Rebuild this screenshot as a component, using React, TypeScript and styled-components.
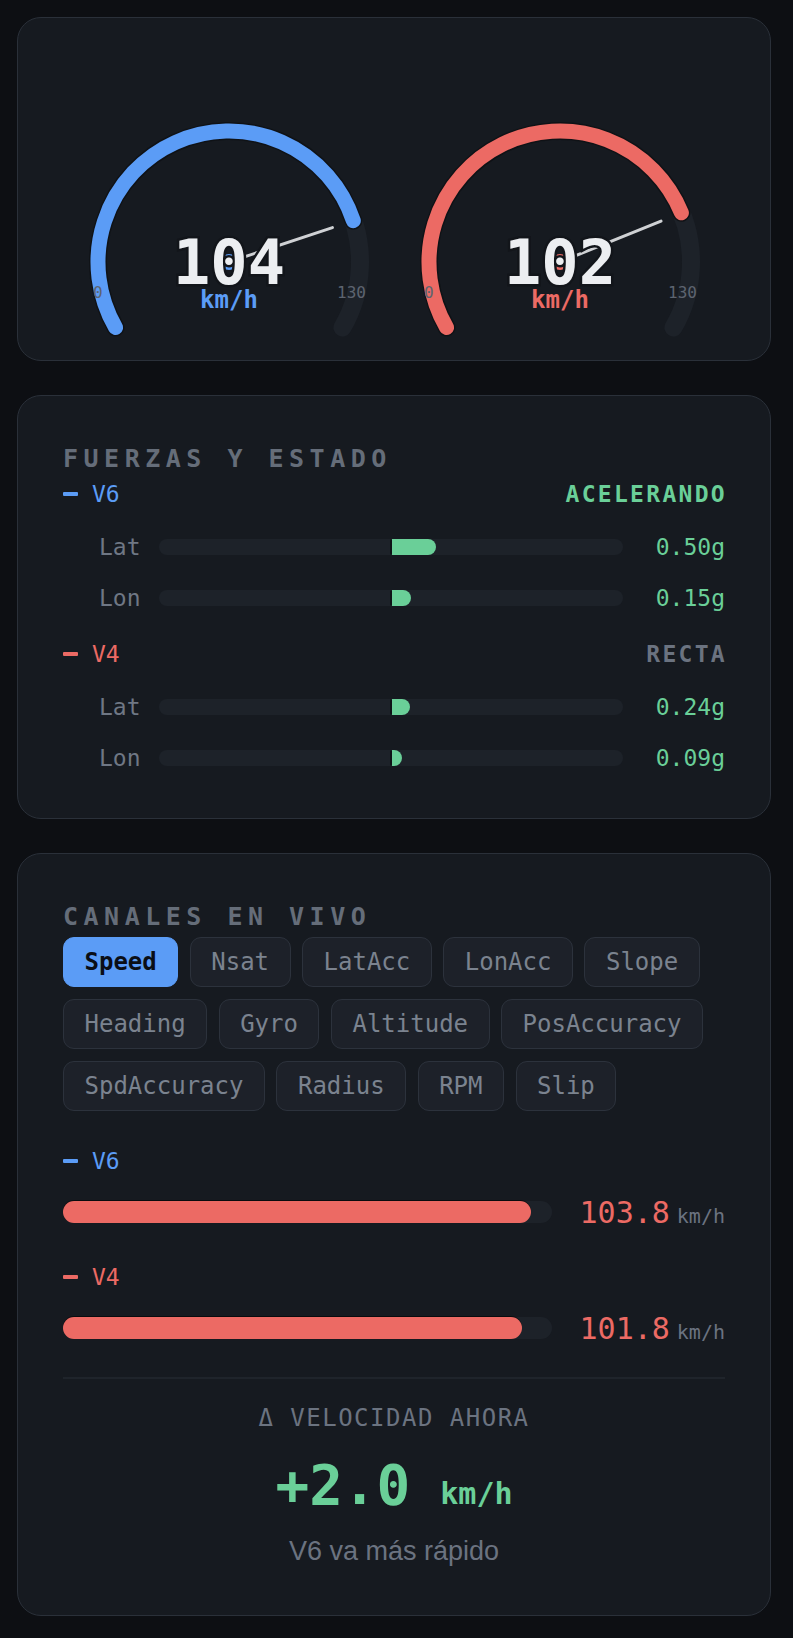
import React from 'react';
import styled, { createGlobalStyle } from 'styled-components';

const MONO = '"DejaVu Sans Mono", "Liberation Mono", monospace';
const SANS = '"Liberation Sans", Arial, sans-serif';

const BLUE = '#5b9cf6';
const RED = '#ec6a64';
const GREEN = '#6acf98';
const MUTED = '#6b7380';

const GlobalStyle = createGlobalStyle`
  html, body {
    margin: 0;
    padding: 0;
    background: #0d0f13;
  }
  body {
    font-family: ${MONO};
  }
`;

const Page = styled.main`
  display: flex;
  flex-direction: column;
  gap: 34px;
  padding: 17px 22px 23px 17px;
`;

const Card = styled.section`
  background: #161a20;
  border: 1px solid #2a3039;
  border-radius: 24px;
  padding: 48px 45px 34px;
`;

const GaugeCard = styled(Card)`
  display: grid;
  grid-template-columns: 1fr 1fr;
  padding: 94px 45px 18px;
`;

const LiveCard = styled(Card)`
  padding-bottom: 48px;
`;

const GaugeSvg = styled.svg`
  display: block;
  margin: 0 auto;
  overflow: visible;
`;

const Title = styled.h2<{ $mb: number }>`
  margin: 0 0 ${(p) => p.$mb}px;
  font: 700 25px/30px ${MONO};
  letter-spacing: 5.5px;
  color: #656d79;
`;

const Head = styled.div<{ $mb: number }>`
  display: flex;
  align-items: center;
  justify-content: space-between;
  height: 28px;
  margin-bottom: ${(p) => p.$mb}px;
`;

const Tag = styled.span<{ $color: string }>`
  display: flex;
  align-items: center;
  gap: 14px;
  font-size: 23px;
  line-height: 28px;
  color: ${(p) => p.$color};
`;

const Dash = styled.span<{ $color: string }>`
  width: 15px;
  height: 4px;
  border-radius: 1px;
  background: ${(p) => p.$color};
`;

const Status = styled.span<{ $color: string }>`
  margin-right: -2px;
  font-size: 23px;
  font-weight: 700;
  letter-spacing: 2.3px;
  color: ${(p) => p.$color};
`;

const Group = styled.div`
  & + & {
    margin-top: 16px;
  }
`;

const ForceRow = styled.div`
  display: grid;
  grid-template-columns: 46px 1fr 88px;
  column-gap: 14px;
  align-items: center;
  height: 51.5px;
  padding-left: 36px;
`;

const AxisLabel = styled.span`
  font-size: 23px;
  color: #6f7784;
`;

const ForceTrack = styled.div`
  display: flex;
  height: 16px;
  border-radius: 8px;
  background: #1d2229;
`;

const ForceFill = styled.div`
  margin-left: calc(50% - 1px);
  border-left: 2px solid #0f1217;
  border-radius: 2px 8px 8px 2px;
  background: ${GREEN};
`;

const ForceValue = styled.span`
  text-align: right;
  font-size: 23px;
  color: ${GREEN};
`;

const Chips = styled.div`
  display: flex;
  flex-wrap: wrap;
  gap: 12px 11.5px;
`;

const Chip = styled.button<{ $active?: boolean }>`
  height: 50px;
  padding: 0 20.5px;
  border: 1px solid ${(p) => (p.$active ? BLUE : '#2c323c')};
  border-radius: 11px;
  background: ${(p) => (p.$active ? BLUE : '#1d2129')};
  color: ${(p) => (p.$active ? '#0a0e16' : '#7b838f')};
  font: ${(p) => (p.$active ? 700 : 400)} 24px/28px ${MONO};
  cursor: pointer;
`;

const SpeedList = styled.div`
  margin-top: 36px;
`;

const SpeedGroup = styled.div`
  & + & {
    margin-top: 33px;
  }
`;

const BarRow = styled.div`
  display: grid;
  grid-template-columns: 1fr auto;
  column-gap: 28px;
  align-items: center;
  height: 36px;
`;

const BarTrack = styled.div`
  height: 22px;
  border-radius: 11px;
  background: #1d2229;
`;

const BarFill = styled.div`
  height: 100%;
  border-radius: 11px;
  background: ${RED};
  box-shadow: 0 -1px 0 rgba(0, 0, 0, 0.55);
`;

const Reading = styled.div`
  display: flex;
  align-items: baseline;
  gap: 7px;
`;

const ReadingNum = styled.span`
  font-size: 30px;
  color: ${RED};
`;

const ReadingUnit = styled.span`
  font-size: 20px;
  color: ${MUTED};
`;

const Divider = styled.hr`
  height: 2px;
  margin: 31px 0 25px;
  border: 0;
  background: #1f242b;
`;

const DeltaLabel = styled.div`
  text-align: center;
  font-size: 24px;
  line-height: 28px;
  letter-spacing: 1.5px;
  color: ${MUTED};
`;

const DeltaValue = styled.div`
  display: flex;
  justify-content: center;
  align-items: baseline;
  gap: 30px;
  margin-top: 21px;
  line-height: 64px;
  font-weight: 700;
  color: ${GREEN};
`;

const DeltaNum = styled.span`
  font-size: 56px;
`;

const DeltaUnit = styled.span`
  font-size: 30px;
`;

const DeltaNote = styled.div`
  margin-top: 9px;
  text-align: center;
  font: 27px/32px ${SANS};
  color: ${MUTED};
`;

type GaugeProps = { value: number; max: number; color: string };

const Gauge = ({ value, max, color }: GaugeProps) => {
  const cx = 150;
  const cy = 150;
  const r = 131;
  const rad = (d: number) => (d * Math.PI) / 180;
  const pt = (d: number, len = r) => [cx + len * Math.cos(rad(d)), cy + len * Math.sin(rad(d))];
  const arc = (a0: number, a1: number) => {
    const [x0, y0] = pt(a0);
    const [x1, y1] = pt(a1);
    return `M${x0} ${y0} A${r} ${r} 0 ${a1 - a0 > 180 ? 1 : 0} 1 ${x1} ${y1}`;
  };
  const end = 150 + 240 * (value / max);
  const [nx, ny] = pt(end, 109);

  return (
    <GaugeSvg width={300} height={230} viewBox="0 0 300 230">
      <path d={arc(150, 390)} fill="none" stroke="#1d2229" strokeWidth={18} strokeLinecap="round" />
      <path d={arc(150, end)} fill="none" stroke="rgba(0,0,0,0.45)" strokeWidth={18} strokeLinecap="round" />
      <path d={arc(150, end)} fill="none" stroke={color} strokeWidth={15} strokeLinecap="round" />
      <line x1={cx} y1={cy} x2={nx} y2={ny} stroke="#cfd1d4" strokeWidth={3} strokeLinecap="round" />
      <circle cx={cx} cy={cy} r={8} fill={color} />
      <text x={14} y={186} fill="#5d6470" fontSize={16} fontFamily={MONO}>
        0
      </text>
      <text x={287} y={186} textAnchor="end" fill="#5d6470" fontSize={16} fontFamily={MONO}>
        130
      </text>
      <text
        x={cx}
        y={172}
        textAnchor="middle"
        fill="#eceef1"
        stroke="#12151a"
        strokeWidth={5}
        paintOrder="stroke"
        fontSize={62}
        fontWeight={700}
        fontFamily={MONO}
      >
        {Math.round(value)}
      </text>
      <text x={cx} y={196} textAnchor="middle" fill={color} fontSize={24} fontWeight={700} fontFamily={MONO}>
        km/h
      </text>
    </GaugeSvg>
  );
};

type Vehicle = {
  name: string;
  color: string;
  status: string;
  statusColor: string;
  lat: string;
  lon: string;
  latW: number;
  lonW: number;
  speed: number;
};

const vehicles: Vehicle[] = [
  { name: 'V6', color: BLUE, status: 'ACELERANDO', statusColor: GREEN, lat: '0.50g', lon: '0.15g', latW: 44, lonW: 19, speed: 103.8 },
  { name: 'V4', color: RED, status: 'RECTA', statusColor: '#6b7380', lat: '0.24g', lon: '0.09g', latW: 18, lonW: 10, speed: 101.8 },
];

const channels = [
  'Speed', 'Nsat', 'LatAcc', 'LonAcc', 'Slope', 'Heading', 'Gyro', 'Altitude',
  'PosAccuracy', 'SpdAccuracy', 'Radius', 'RPM', 'Slip',
];

const SPEED_SCALE = 108.4;

export default function App() {
  return (
    <>
      <GlobalStyle />
      <Page>
        <GaugeCard>
          <Gauge value={103.8} max={130} color={BLUE} />
          <Gauge value={101.8} max={130} color={RED} />
        </GaugeCard>

        <Card>
          <Title $mb={6}>FUERZAS Y ESTADO</Title>
          {vehicles.map((v) => (
            <Group key={v.name}>
              <Head $mb={13}>
                <Tag $color={v.color}>
                  <Dash $color={v.color} />
                  {v.name}
                </Tag>
                <Status $color={v.statusColor}>{v.status}</Status>
              </Head>
              <ForceRow>
                <AxisLabel>Lat</AxisLabel>
                <ForceTrack>
                  <ForceFill style={{ width: v.latW }} />
                </ForceTrack>
                <ForceValue>{v.lat}</ForceValue>
              </ForceRow>
              <ForceRow>
                <AxisLabel>Lon</AxisLabel>
                <ForceTrack>
                  <ForceFill style={{ width: v.lonW }} />
                </ForceTrack>
                <ForceValue>{v.lon}</ForceValue>
              </ForceRow>
            </Group>
          ))}
        </Card>

        <LiveCard>
          <Title $mb={5}>CANALES EN VIVO</Title>
          <Chips>
            {channels.map((c) => (
              <Chip key={c} $active={c === 'Speed'}>
                {c}
              </Chip>
            ))}
          </Chips>

          <SpeedList>
            {vehicles.map((v) => (
              <SpeedGroup key={v.name}>
                <Head $mb={19}>
                  <Tag $color={v.color}>
                    <Dash $color={v.color} />
                    {v.name}
                  </Tag>
                </Head>
                <BarRow>
                  <BarTrack>
                    <BarFill style={{ width: `${(v.speed / SPEED_SCALE) * 100}%` }} />
                  </BarTrack>
                  <Reading>
                    <ReadingNum>{v.speed.toFixed(1)}</ReadingNum>
                    <ReadingUnit>km/h</ReadingUnit>
                  </Reading>
                </BarRow>
              </SpeedGroup>
            ))}
          </SpeedList>

          <Divider />
          <DeltaLabel>Δ VELOCIDAD AHORA</DeltaLabel>
          <DeltaValue>
            <DeltaNum>+2.0</DeltaNum>
            <DeltaUnit>km/h</DeltaUnit>
          </DeltaValue>
          <DeltaNote>V6 va más rápido</DeltaNote>
        </LiveCard>
      </Page>
    </>
  );
}
